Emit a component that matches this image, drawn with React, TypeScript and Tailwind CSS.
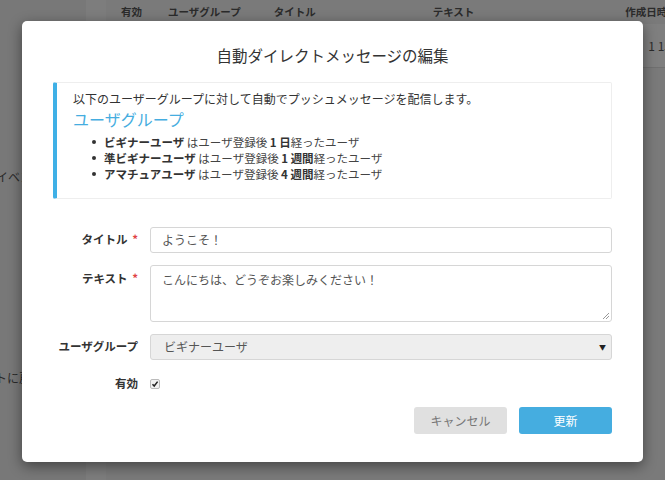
import React from 'react';

const FONT = { fontFamily: '"Noto Sans CJK JP", "Noto Sans", sans-serif' };

const groups = [
  { name: 'ビギナーユーザ', num: '1', unit: '日' },
  { name: '準ビギナーユーザ', num: '1', unit: '週間' },
  { name: 'アマチュアユーザ', num: '4', unit: '週間' },
];

const Background: React.FC = () => (
  <div className="flex h-[480px] w-[665px] bg-[#7a7a7a]">
    <div className="w-[86px] shrink-0 overflow-hidden bg-[#787878] whitespace-nowrap">
      <div className="h-[22px]" />
      <div className="mt-[146px] text-[12px] leading-[18px] text-[#2a2a2a] -ml-[4px]">イベン</div>
      <div className="mt-[183px] text-[12px] leading-[18px] text-[#2a2a2a] -ml-[5px]">トに戻</div>
    </div>
    <div className="w-[20px] shrink-0 bg-[#7d7d7d]" />
    <div className="min-w-0 flex-1 overflow-hidden">
      <div className="flex h-[24px] items-center whitespace-nowrap text-[10.5px] font-bold text-[#2b2b2b]">
        <span className="ml-[15px] shrink-0">有効</span>
        <span className="ml-[26px] shrink-0">ユーザグループ</span>
        <span className="ml-[33px] shrink-0">タイトル</span>
        <span className="ml-[117px] shrink-0">テキスト</span>
        <span className="ml-[151px] shrink-0">作成日時</span>
      </div>
      <div className="h-[44px] border-b border-[#707070] bg-[#7f7f7f] pt-[13px] text-right whitespace-nowrap text-[12px] text-[#2b2b2b]">
        <span className="-mr-[6px]">1 15</span>
      </div>
    </div>
  </div>
);

export default function App() {
  return (
    <div className="relative h-[480px] w-[665px] overflow-hidden" style={FONT}>
      <Background />
      <div className="absolute left-[22px] top-[21px] w-[621px] h-[441px] rounded-[5px] bg-white shadow-[0_4px_14px_rgba(0,0,0,0.45)] px-[31px]">
        <h2 className="pt-[21px] text-center text-[15.5px] leading-[26px] text-[#333]">
          自動ダイレクトメッセージの編集
        </h2>
        <div className="mt-[14px] h-[117px] rounded-[2px] border border-[#eee] border-l-[4px] border-l-[#3fb0e6] pl-[16px] pt-[8px]">
          <p className="text-[12px] leading-[16px] text-[#333]">以下のユーザーグループに対して自動でプッシュメッセージを配信します。</p>
          <p className="mt-[2px] text-[16px] leading-[20px] text-[#45ade0]">ユーザグループ</p>
          <ul className="mt-[5px] pl-[19px] text-[11.5px] leading-[16px] text-[#333]">
            {groups.map((g) => (
              <li key={g.name} className="flex items-center">
                <span className="mr-[8px] h-[4px] w-[4px] rounded-full bg-[#333]" />
                <span className="font-bold">{g.name}</span>
                <span className="text-[#444]">&nbsp;はユーザ登録後&nbsp;</span>
                <span className="font-bold">{g.num}&nbsp;{g.unit}</span>
                <span className="text-[#444]">経ったユーザ</span>
              </li>
            ))}
          </ul>
        </div>

        <div className="mt-[28px] flex flex-col gap-[12px]">
          <div className="flex items-center">
            <label className="w-[87px] shrink-0 pr-[2px] text-right text-[11.5px] font-bold text-[#333]">
              タイトル <span className="ml-[2px] text-[#e04545]">*</span>
            </label>
            <div className="ml-[10px] flex h-[26px] flex-1 items-center rounded-[3px] border border-[#d6d6d6] px-[11px] text-[12px] text-[#555]">
              ようこそ！
            </div>
          </div>
          <div className="flex items-start">
            <label className="mt-[5px] w-[87px] shrink-0 pr-[2px] text-right text-[11.5px] font-bold text-[#333]">
              テキスト <span className="ml-[2px] text-[#e04545]">*</span>
            </label>
            <div className="relative ml-[10px] h-[57px] flex-1 rounded-[3px] border border-[#d6d6d6] px-[11px] pt-[5px] text-[12px] text-[#555]">
              こんにちは、どうぞお楽しみください！
              <svg className="absolute bottom-[2px] right-[2px]" width="7" height="7" viewBox="0 0 7 7">
                <path d="M1 7 L7 1 M4 7 L7 4" stroke="#999" strokeWidth="1" />
              </svg>
            </div>
          </div>
          <div className="flex items-center">
            <label className="w-[87px] shrink-0 pr-[2px] text-right text-[11.5px] font-bold text-[#333] whitespace-nowrap">
              ユーザグループ
            </label>
            <div className="ml-[10px] flex h-[26px] flex-1 items-center justify-between rounded-[3px] border border-[#d6d6d6] bg-[#eee] pl-[13px] pr-[5px] text-[12px] text-[#555]">
              <span>ビギナーユーザ</span>
              <span className="text-[7px] text-[#222]">▼</span>
            </div>
          </div>
          <div className="mt-[3px] flex items-center">
            <label className="w-[87px] shrink-0 pr-[2px] text-right text-[11.5px] font-bold text-[#333]">有効</label>
            <div className="ml-[10px] flex h-[10px] w-[10px] items-center justify-center rounded-[2px] border border-[#bbb] bg-[#f1f1f1]">
              <svg width="8" height="8" viewBox="0 0 8 8">
                <path d="M1.5 4.2 L3.2 6 L6.6 1.6" stroke="#222" strokeWidth="1.5" fill="none" />
              </svg>
            </div>
          </div>
        </div>

        <div className="mt-[15px] flex justify-end gap-[12px]">
          <button className="h-[27px] w-[93px] rounded-[3px] bg-[#e0e0e0] text-[12px] text-[#777]">キャンセル</button>
          <button className="h-[27px] w-[93px] rounded-[3px] bg-[#45ade0] text-[12px] text-white">更新</button>
        </div>
      </div>
    </div>
  );
}
